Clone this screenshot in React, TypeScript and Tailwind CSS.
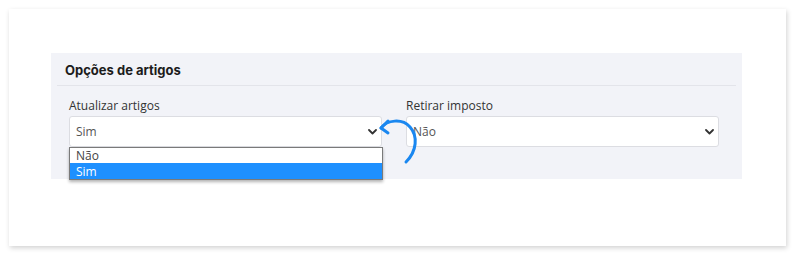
import React from 'react';

const labelFont = { fontFamily: '"Open Sans", "Noto Sans", sans-serif' };

const Chevron: React.FC = () => (
  <svg width="9" height="6" viewBox="0 0 9 6" className="shrink-0">
    <path d="M1 1l3.5 3.5L8 1" fill="none" stroke="#333" strokeWidth="1.8" strokeLinecap="round" strokeLinejoin="round" />
  </svg>
);

const FakeSelect: React.FC<{ value: string }> = ({ value }) => (
  <div className="flex h-[31px] w-[313px] items-center justify-between rounded-[3px] border border-[#dcdde2] bg-white pl-[6px] pr-[4px] text-[12px] text-[#555]">
    <span>{value}</span>
    <Chevron />
  </div>
);

const App: React.FC = () => {
  return (
    <div className="h-[260px] w-[800px] bg-white pl-[9px] pt-[9px]" style={labelFont}>
      <div className="h-[237px] w-[777px] bg-white pl-[42px] pt-[44px] shadow-[1px_2px_5px_rgba(0,0,0,0.18)]">
        <div className="h-[126px] w-[691px] bg-[#f2f3f8]">
          <div className="mx-[6px] flex h-[33px] items-center border-b border-[#e3e4ea] pl-[8px] pt-[3px]">
            <h2
              className="text-[13px] font-bold text-[#1c1c1c]"
              style={{ fontFamily: 'Inter, "Noto Sans", sans-serif' }}
            >
              Opções de artigos
            </h2>
          </div>
          <div className="relative flex gap-[24px] pl-[18px] pt-[12px]">
            <div className="relative flex flex-col">
              <label className="mb-[2px] text-[12px] leading-[16px] text-[#333]">Atualizar artigos</label>
              <FakeSelect value="Sim" />
              <div className="absolute left-0 top-[49px] w-[314px] border border-[#7a7a7a] bg-white text-[12px] shadow-[0_2px_3px_rgba(0,0,0,0.3)]">
                <div className="flex h-[15px] items-center pl-[6px] leading-[13px] text-[#444]">Não</div>
                <div className="flex h-[16px] items-center bg-[#1e90ff] pl-[6px] leading-[13px] text-white">Sim</div>
              </div>
            </div>
            <div className="flex flex-col">
              <label className="mb-[2px] text-[12px] leading-[16px] text-[#333]">Retirar imposto</label>
              <FakeSelect value="Não" />
            </div>
            <svg
              className="absolute left-[326px] top-[29px]"
              width="46"
              height="56"
              viewBox="0 0 46 56"
            >
              <path
                d="M4 13 C10 5, 25 3, 33 12 C41 21, 40 36, 29 47"
                fill="none"
                stroke="#1a87f0"
                strokeWidth="3"
                strokeLinecap="round"
              />
              <path
                d="M11 6 L4 13 L11 18"
                fill="none"
                stroke="#1a87f0"
                strokeWidth="3"
                strokeLinecap="round"
                strokeLinejoin="round"
              />
            </svg>
          </div>
        </div>
      </div>
    </div>
  );
};

export default App;
